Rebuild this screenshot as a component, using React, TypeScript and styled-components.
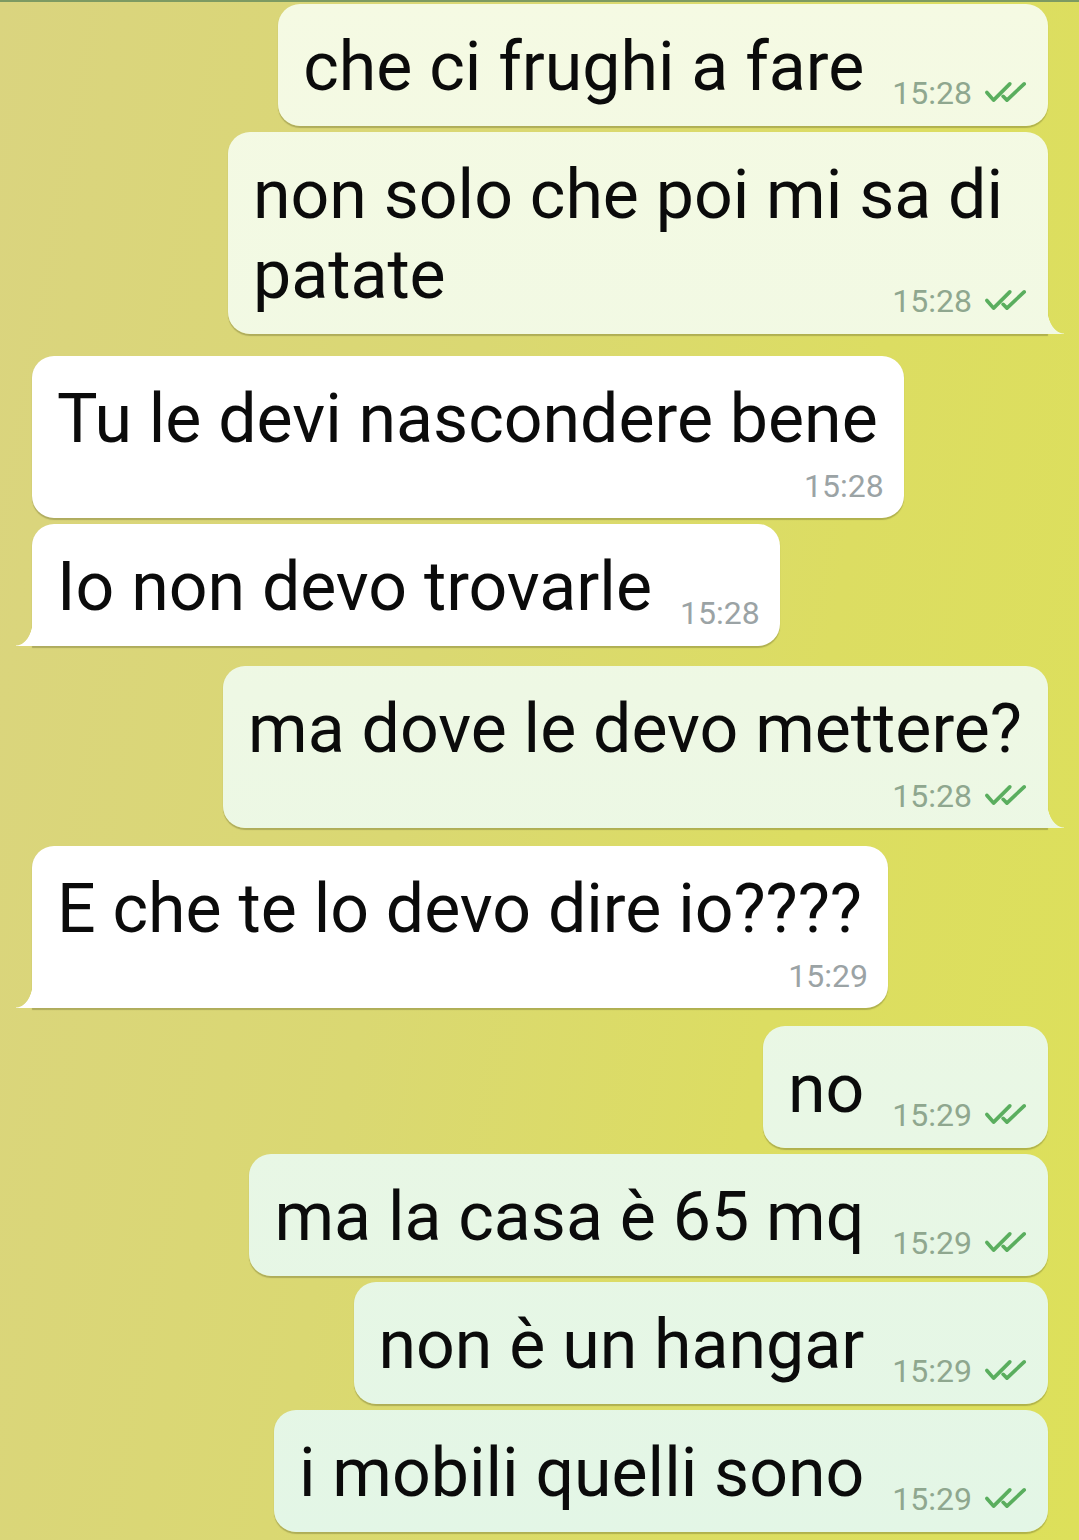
import styled, { createGlobalStyle } from 'styled-components';

type Side = 'in' | 'out';
type Layout = 'inline' | 'below' | 'tuck';

interface Message {
  side: Side;
  text: string;
  time: string;
  layout: Layout;
  tail?: boolean;
  gap: number;
}

const messages: Message[] = [
  { side: 'out', text: 'che ci frughi a fare', time: '15:28', layout: 'inline', gap: 0 },
  { side: 'out', text: 'non solo che poi mi sa di\npatate', time: '15:28', layout: 'tuck', tail: true, gap: 6 },
  { side: 'in', text: 'Tu le devi nascondere bene', time: '15:28', layout: 'below', gap: 22 },
  { side: 'in', text: 'Io non devo trovarle', time: '15:28', layout: 'inline', tail: true, gap: 6 },
  { side: 'out', text: 'ma dove le devo mettere?', time: '15:28', layout: 'below', tail: true, gap: 20 },
  { side: 'in', text: 'E che te lo devo dire io????', time: '15:29', layout: 'below', tail: true, gap: 18 },
  { side: 'out', text: 'no', time: '15:29', layout: 'inline', gap: 18 },
  { side: 'out', text: 'ma la casa è 65 mq', time: '15:29', layout: 'inline', gap: 6 },
  { side: 'out', text: 'non è un hangar', time: '15:29', layout: 'inline', gap: 6 },
  { side: 'out', text: 'i mobili quelli sono', time: '15:29', layout: 'inline', gap: 6 },
];

const GlobalStyle = createGlobalStyle`
  html, body {
    margin: 0;
    padding: 0;
  }
  body {
    width: 1079px;
    height: 1540px;
    overflow: hidden;
    font-family: Roboto, "Noto Sans", "Liberation Sans", sans-serif;
  }
`;

const Screen = styled.div`
  width: 1079px;
  height: 1540px;
  box-sizing: border-box;
  border-top: 2px solid #7d9a62;
  padding: 2px 31px 0 32px;
  display: flex;
  flex-direction: column;
  overflow: hidden;
  background: linear-gradient(100deg, #dad47f 0%, #dad872 40%, #dcdd62 70%, #dde05a 100%);
`;

const Bubble = styled.div<{ $side: Side; $tail: boolean; $layout: Layout; $gap: number }>`
  position: relative;
  align-self: ${(p) => (p.$side === 'out' ? 'flex-end' : 'flex-start')};
  max-width: ${(p) => (p.$side === 'out' ? 830 : 880)}px;
  box-sizing: border-box;
  margin-top: ${(p) => p.$gap}px;
  padding: 23px ${(p) => (p.$layout === 'tuck' ? 45 : 20)}px 19px 25px;
  border-radius: 22px;
  ${(p) => (p.$tail && p.$side === 'out' ? 'border-bottom-right-radius: 0;' : '')}
  ${(p) => (p.$tail && p.$side === 'in' ? 'border-bottom-left-radius: 0;' : '')}
  background: ${(p) =>
    p.$side === 'out'
      ? 'linear-gradient(180deg, #f5fae3 0%, #eef8e4 45%, #e3f6e6 100%) fixed'
      : '#ffffff'};
  box-shadow: 0 1.5px 1px rgba(95, 95, 40, 0.35);
  display: flex;
  flex-direction: ${(p) => (p.$layout === 'inline' ? 'row' : 'column')};
  align-items: ${(p) => (p.$layout === 'inline' ? 'flex-end' : 'stretch')};

  &::after {
    content: ${(p) => (p.$tail ? "''" : 'none')};
    position: absolute;
    bottom: 0;
    width: 17px;
    height: 26px;
    ${(p) => (p.$side === 'out' ? 'right: -16px;' : 'left: -16px;')}
    background: inherit;
    -webkit-mask-image: radial-gradient(
      ellipse 17px 26px at ${(p) => (p.$side === 'out' ? '100% 0' : '0 0')},
      transparent 96%,
      #000 100%
    );
    mask-image: radial-gradient(
      ellipse 17px 26px at ${(p) => (p.$side === 'out' ? '100% 0' : '0 0')},
      transparent 96%,
      #000 100%
    );
  }
`;

const Text = styled.div<{ $pad?: number }>`
  font-size: 68px;
  line-height: 80px;
  color: #0b0b0b;
  padding-right: ${(p) => p.$pad ?? 0}px;
`;

const LastLine = styled.div`
  display: flex;
  align-items: flex-end;
  justify-content: space-between;
  margin-right: -25px;
`;

const Meta = styled.div<{ $side: Side; $layout: Layout }>`
  display: flex;
  align-items: center;
  align-self: flex-end;
  flex-shrink: 0;
  gap: 12px;
  font-size: 32px;
  line-height: 37px;
  color: ${(p) => (p.$side === 'out' ? '#8fa78f' : '#9ba3a5')};
  margin-left: ${(p) => (p.$layout === 'below' ? 0 : 28)}px;
  margin-top: ${(p) => (p.$layout === 'below' ? 9 : 0)}px;
  margin-bottom: ${(p) => (p.$layout === 'below' ? -6 : -5)}px;
`;

const Ticks = styled.svg`
  width: 44px;
  height: 22px;
  margin-bottom: 3px;
`;

const DoubleTick = () => (
  <Ticks
    viewBox="0 0 46 23"
    fill="none"
    stroke="#5aae5e"
    strokeWidth="3.8"
    strokeLinecap="round"
    strokeLinejoin="round"
  >
    <path d="M3 12 L10 20 L27 3" />
    <path d="M20 16 L24 20 L42 3" />
  </Ticks>
);

const ChatBubble = ({ m }: { m: Message }) => {
  const meta = (
    <Meta $side={m.side} $layout={m.layout}>
      {m.time}
      {m.side === 'out' && <DoubleTick />}
    </Meta>
  );

  if (m.layout === 'tuck') {
    const lines = m.text.split('\n');
    const last = lines.pop();
    return (
      <Bubble $side={m.side} $tail={!!m.tail} $layout={m.layout} $gap={m.gap}>
        {lines.map((l, i) => (
          <Text key={i}>{l}</Text>
        ))}
        <LastLine>
          <Text>{last}</Text>
          {meta}
        </LastLine>
      </Bubble>
    );
  }

  return (
    <Bubble $side={m.side} $tail={!!m.tail} $layout={m.layout} $gap={m.gap}>
      <Text $pad={m.layout === 'below' ? 6 : 0}>{m.text}</Text>
      {meta}
    </Bubble>
  );
};

const App = () => {
  return (
    <>
      <GlobalStyle />
      <Screen>
        {messages.map((m, i) => (
          <ChatBubble key={i} m={m} />
        ))}
      </Screen>
    </>
  );
};

export default App;
